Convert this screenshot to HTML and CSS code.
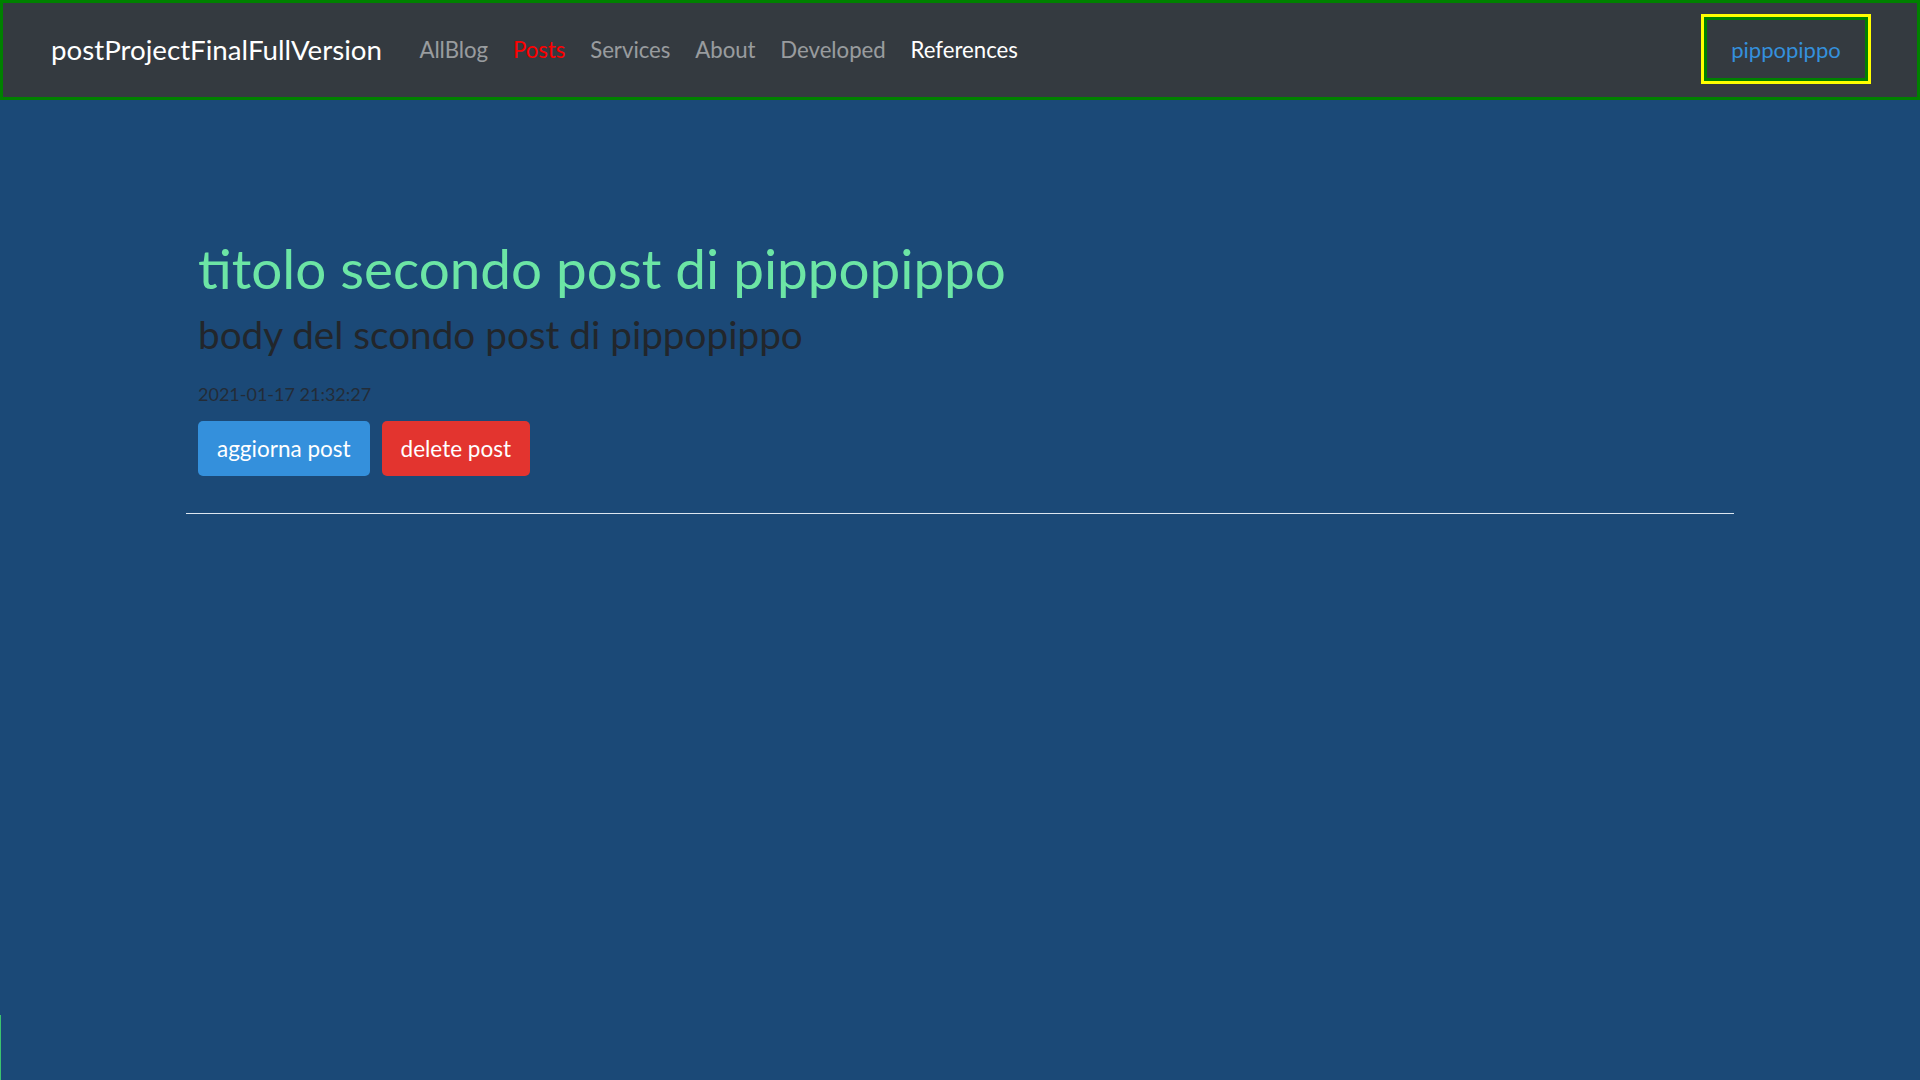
FILE: index.html
```html
<!DOCTYPE html>
<html lang="it">
<head>
<meta charset="utf-8">
<title>postProjectFinalFullVersion</title>
<link rel="stylesheet" href="styles.css">
</head>
<body>
<nav class="navbar">
  <a class="brand" href="#">postProjectFinalFullVersion</a>
  <ul class="nav-links">
    <li><a href="#" class="nav-link">AllBlog</a></li>
    <li><a href="#" class="nav-link active-red">Posts</a></li>
    <li><a href="#" class="nav-link">Services</a></li>
    <li><a href="#" class="nav-link">About</a></li>
    <li><a href="#" class="nav-link">Developed</a></li>
    <li><a href="#" class="nav-link active-white">References</a></li>
  </ul>
  <div class="user-box">
    <div class="user-inner"><a href="#" class="user-link">pippopippo</a></div>
  </div>
</nav>
<main class="container">
  <article class="post">
    <h1 class="post-title">titolo secondo post di pippopippo</h1>
    <p class="post-body">body del scondo post di pippopippo</p>
    <p class="post-date">2021-01-17 21:32:27</p>
    <div class="actions">
      <button class="btn btn-blue">aggiorna post</button>
      <button class="btn btn-red">delete post</button>
    </div>
  </article>
  <hr class="divider">
</main>
<div class="footer-mark"></div>
</body>
</html>
```
FILE: styles.css
```css
html, body {
  margin: 0;
  padding: 0;
}
body {
  background: #1b4977;
  font-family: Lato, "Noto Sans", sans-serif;
  min-height: 1080px;
  position: relative;
}
.navbar {
  box-sizing: border-box;
  height: 100px;
  border: 3px solid #008000;
  background: #343a40;
  display: flex;
  align-items: center;
  padding: 0 46px 2px 48px;
}
.brand {
  color: #ffffff;
  text-decoration: none;
  font-size: 27.7px;
  margin-right: 25px;
}
.nav-links {
  display: flex;
  list-style: none;
  margin: 0;
  padding: 0;
  flex: 1;
}
.nav-link {
  display: block;
  padding: 0 12.4px;
  color: rgba(255,255,255,0.5);
  text-decoration: none;
  font-size: 22.2px;
}
.active-red { color: #ff0000; }
.active-white { color: #ffffff; }
.user-box {
  box-sizing: border-box;
  width: 170px;
  height: 70px;
  border: 3px solid #ffff00;
}
.user-inner {
  box-sizing: border-box;
  height: 100%;
  border: 3px solid #008000;
  display: flex;
  align-items: center;
  justify-content: center;
}
.user-link {
  color: #3490dc;
  text-decoration: none;
  font-size: 22px;
}
.container {
  width: 1548px;
  margin: 0 auto;
  padding-top: 135px;
}
.post {
  padding: 0 12px;
}
.post-title {
  margin: 0;
  color: #6ce5a5;
  font-weight: 400;
  font-size: 54.8px;
  line-height: 66px;
}
.post-body {
  margin: 10px 0 0;
  color: #22262b;
  font-size: 38.7px;
  line-height: 47px;
}
.post-date {
  margin: 23px 0 0;
  color: #232c37;
  font-size: 18px;
  line-height: 27px;
}
.actions {
  display: flex;
  gap: 12px;
  margin-top: 12.5px;
}
.btn {
  border: 0;
  border-radius: 5px;
  height: 55px;
  padding: 0 19px;
  color: #ffffff;
  font-family: inherit;
  font-size: 22.5px;
  cursor: pointer;
}
.btn-blue { background: #3490dc; }
.btn-red { background: #e3342f; }
.divider {
  margin: 37px 0 0;
  border: 0;
  border-top: 1px solid #dce6f0;
}
.footer-mark {
  position: absolute;
  left: 0;
  bottom: 0;
  width: 1px;
  height: 65px;
  background: #3cc36e;
}
```
